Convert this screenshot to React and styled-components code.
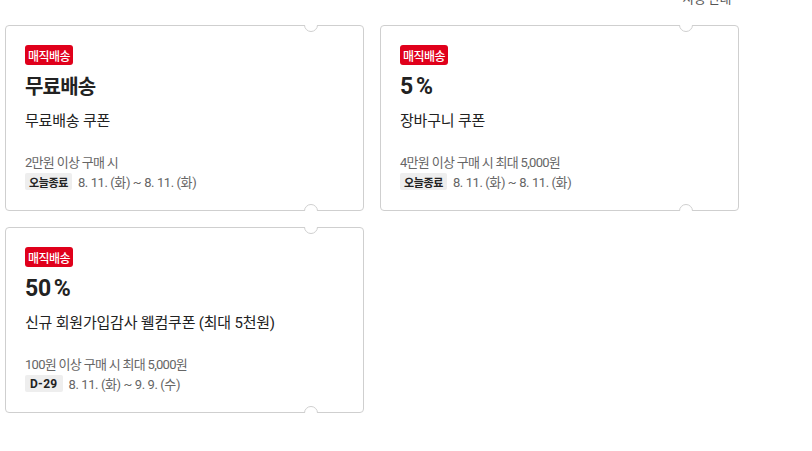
import React from 'react'
import styled, { createGlobalStyle } from 'styled-components'

const GlobalStyle = createGlobalStyle`
  body {
    margin: 0;
    background: #fff;
    font-family: Roboto, "Noto Sans CJK KR", sans-serif;
    color: #222;
  }
`

const coupons = [
  {
    id: 1,
    title: '무료배송',
    name: '무료배송 쿠폰',
    condition: '2만원 이상 구매 시',
    tag: '오늘종료',
    period: '8. 11. (화) ~ 8. 11. (화)',
  },
  {
    id: 2,
    title: '5%',
    name: '장바구니 쿠폰',
    condition: '4만원 이상 구매 시 최대 5,000원',
    tag: '오늘종료',
    period: '8. 11. (화) ~ 8. 11. (화)',
  },
  {
    id: 3,
    title: '50%',
    name: '신규 회원가입감사 웰컴쿠폰 (최대 5천원)',
    condition: '100원 이상 구매 시 최대 5,000원',
    tag: 'D-29',
    period: '8. 11. (화) ~ 9. 9. (수)',
  },
]

const CouponCard = ({ title, name, condition, tag, period }) => {
  const isPercent = title.endsWith('%')
  const isCountdown = tag.startsWith('D-')

  return (
    <Card>
      <Badge>매직배송</Badge>
      <Title $numeric={isPercent}>
        {isPercent ? (
          <>
            {title.slice(0, -1)}
            <Percent>%</Percent>
          </>
        ) : (
          title
        )}
      </Title>
      <Name>{name}</Name>
      <Condition>{condition}</Condition>
      <Period>
        <Tag $countdown={isCountdown}>{tag}</Tag>
        <span>{period}</span>
      </Period>
    </Card>
  )
}

const App = () => (
  <>
    <GlobalStyle />
    <Page>
      <Header>
        <HeaderText>사용 안내</HeaderText>
      </Header>
      <Grid>
        {coupons.map((c) => (
          <CouponCard key={c.id} {...c} />
        ))}
      </Grid>
    </Page>
  </>
)

const Page = styled.div`
  padding: 0 0 0 5px;
`

const Header = styled.div`
  width: 726px;
  height: 25px;
  display: flex;
  justify-content: flex-end;
  align-items: flex-start;
  overflow: hidden;
`

const HeaderText = styled.div`
  font-size: 13px;
  line-height: 13px;
  margin-top: -8px;
  color: #555;
  letter-spacing: -0.5px;
`

const Grid = styled.div`
  display: grid;
  grid-template-columns: 359px 359px;
  gap: 16px;
`

const Card = styled.div`
  position: relative;
  box-sizing: border-box;
  height: 186px;
  padding: 19px 19px 0;
  border: 1px solid #cfcfcf;
  border-radius: 4px;
  background: #fff;
  display: flex;
  flex-direction: column;
  align-items: flex-start;

  &::before,
  &::after {
    content: '';
    position: absolute;
    right: 45px;
    width: 12px;
    height: 12px;
    border: 1px solid #cfcfcf;
    border-radius: 50%;
    background: #fff;
  }

  &::before {
    top: -8px;
    clip-path: inset(7px 0 0 0);
  }

  &::after {
    bottom: -8px;
    clip-path: inset(0 0 7px 0);
  }
`

const Badge = styled.span`
  display: inline-flex;
  align-items: center;
  height: 20px;
  padding: 0 3px;
  border-radius: 3px;
  background: #e0001b;
  color: #fff;
  font-size: 12px;
  font-weight: 500;
  letter-spacing: -0.5px;
`

const Title = styled.div`
  margin-top: 9px;
  height: 26px;
  font-size: ${({ $numeric }) => ($numeric ? '23px' : '20px')};
  line-height: 26px;
  font-weight: 700;
  color: #222;
  letter-spacing: ${({ $numeric }) => ($numeric ? '-0.3px' : '-0.8px')};
`

const Percent = styled.span`
  margin-left: 3px;
`

const Name = styled.div`
  margin-top: 10px;
  font-size: 15px;
  line-height: 22px;
  color: #222;
  letter-spacing: -0.2px;
`

const Condition = styled.div`
  margin-top: 23px;
  font-size: 13px;
  line-height: 16px;
  color: #666;
  letter-spacing: -0.7px;
`

const Period = styled.div`
  margin-top: 1px;
  display: flex;
  align-items: center;
  gap: 6px;
  font-size: 13px;
  color: #666;
  letter-spacing: -0.4px;
`

const Tag = styled.span`
  display: inline-flex;
  align-items: center;
  height: 17px;
  padding: 0 ${({ $countdown }) => ($countdown ? '5px' : '4px')};
  border-radius: 2px;
  background: #eee;
  color: #222;
  font-size: ${({ $countdown }) => ($countdown ? '12px' : '11px')};
  font-weight: 700;
  letter-spacing: ${({ $countdown }) => ($countdown ? '0.3px' : '-0.4px')};
`

export default App
